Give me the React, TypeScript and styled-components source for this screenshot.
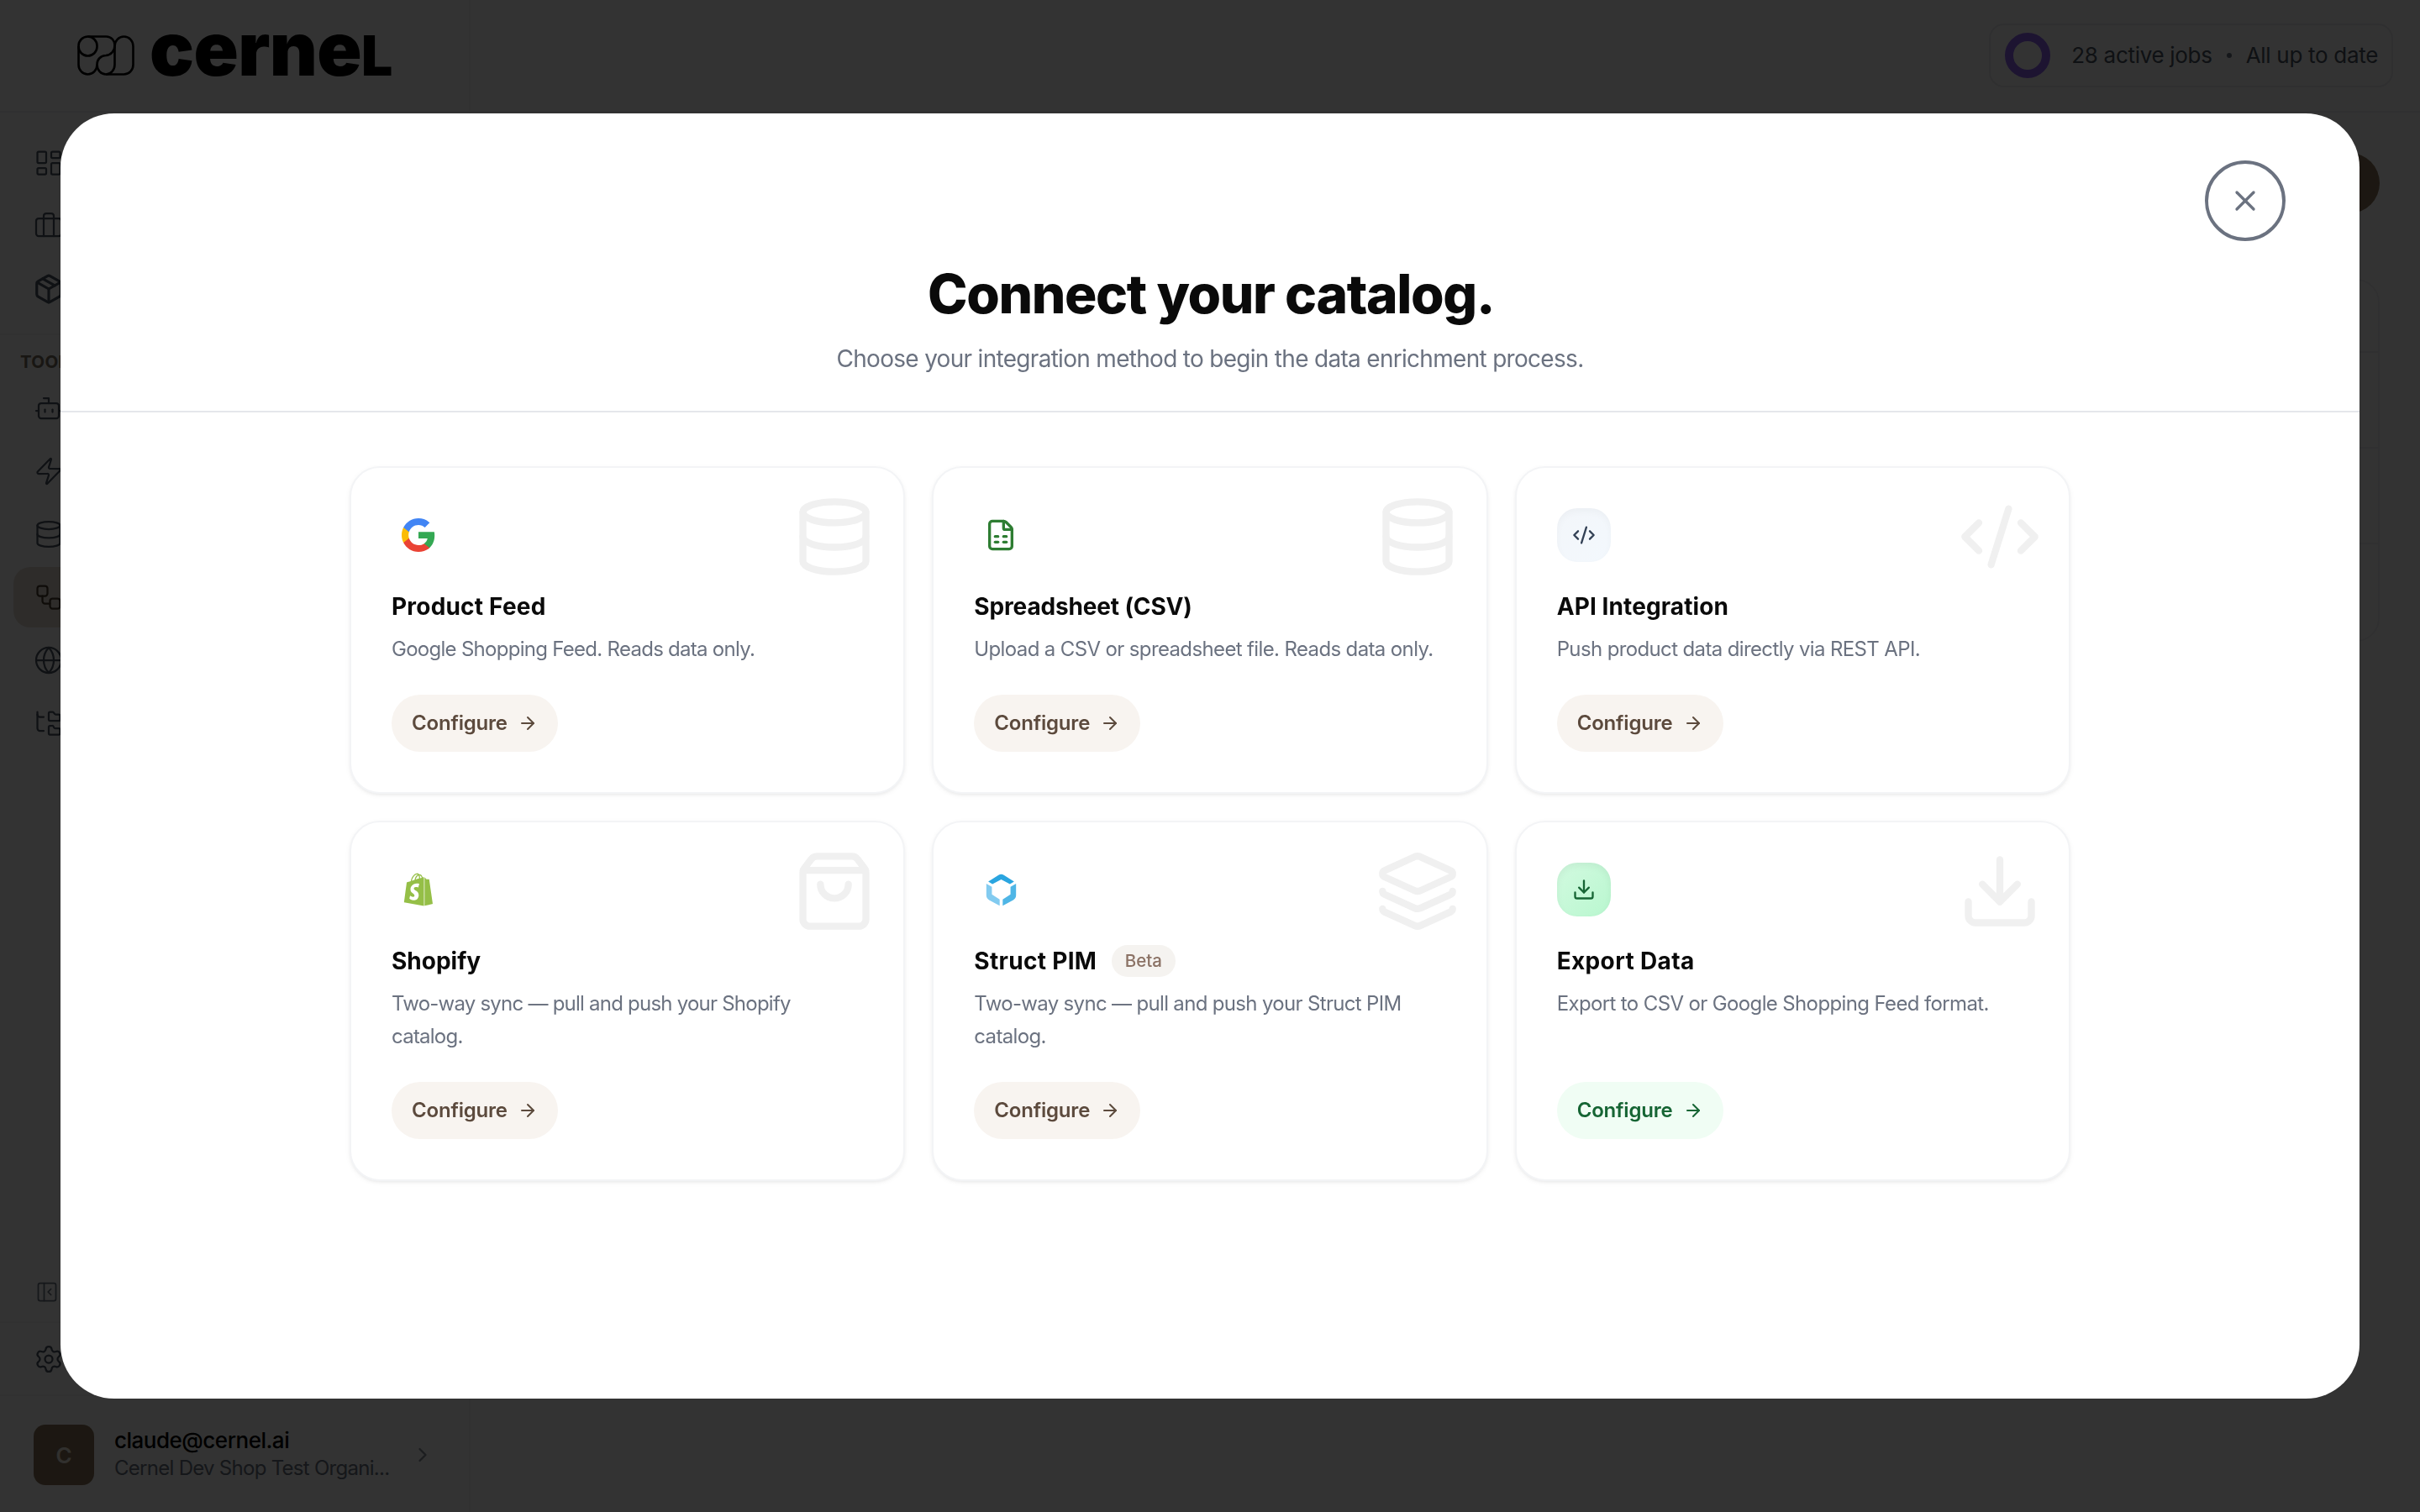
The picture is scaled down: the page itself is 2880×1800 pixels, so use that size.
import React from 'react';
import styled, { createGlobalStyle, css } from 'styled-components';
import {
  ArrowRight,
  Bot,
  Briefcase,
  ChevronRight,
  CodeXml,
  Database,
  Download,
  FileSpreadsheet,
  FolderTree,
  Globe,
  Layers,
  LayoutDashboard,
  Package,
  PanelLeftClose,
  Settings,
  ShoppingBag,
  Workflow,
  X,
  Zap,
  type LucideIcon,
} from 'lucide-react';
import { FaShopify } from 'react-icons/fa';

const GlobalStyle = createGlobalStyle`
  *, *::before, *::after { box-sizing: border-box; }
  body {
    margin: 0;
    background: #ffffff;
    font-family: Inter, "Liberation Sans", sans-serif;
    color: #0a0a0a;
  }
  h1, h2, p { margin: 0; }
  button { font: inherit; border: 0; margin: 0; cursor: pointer; }
  svg { display: block; flex: none; }
`;

/* ---------- App shell ---------- */

const Shell = styled.div`
  display: grid;
  grid-template-columns: 560px 1fr;
  width: 2880px;
  height: 1800px;
  overflow: hidden;
`;

const Sidebar = styled.aside`
  display: flex;
  flex-direction: column;
  border-right: 2px solid #f3f4f6;
`;

const Brand = styled.div`
  display: flex;
  align-items: center;
  gap: 20px;
  height: 134px;
  padding: 0 0 0 92px;
  border-bottom: 2px solid #f0f0f2;
`;

const Wordmark = styled.span`
  display: flex;
  align-items: baseline;
  height: 88px;
  margin-top: -17px;
  margin-left: -2px;
  font-size: 88px;
  line-height: 88px;
  font-weight: 900;
  letter-spacing: -0.6px;
  color: #000000;
`;

const WordmarkTail = styled.span`
  font-size: 66px;
  letter-spacing: 0;
`;

const NavList = styled.nav`
  display: flex;
  flex-direction: column;
  gap: 3px;
  padding: 24px 16px 0;
`;

const ToolsList = styled(NavList)`
  padding-top: 4px;
`;

const NavItem = styled.div<{ $active?: boolean }>`
  display: flex;
  align-items: center;
  height: 72px;
  padding: 0 24px;
  border-radius: 20px;
  color: ${(p) => (p.$active ? '#4b3e2e' : '#4b5563')};
  background: ${(p) => (p.$active ? '#e4ddd3' : 'transparent')};
`;

const NavIcon = styled.span`
  display: flex;
  justify-content: center;
  width: 36px;
`;

const SectionLabel = styled.div`
  margin-top: 17px;
  border-top: 2px solid #f3f4f6;
  padding: 18px 24px 0;
  height: 49px;
  font-size: 20.5px;
  line-height: 28px;
  font-weight: 700;
  letter-spacing: 0.3px;
  color: #7a6e60;
`;

const SidebarFoot = styled.div`
  display: flex;
  flex-direction: column;
  margin-top: auto;
`;

const CollapseRow = styled.div`
  display: flex;
  align-items: center;
  height: 71px;
  padding: 0 42px;
  color: #6b7280;
`;

const SettingsRow = styled.div`
  display: flex;
  align-items: center;
  height: 87px;
  padding: 0 40px;
  border-top: 2px solid #f3f4f6;
  color: #4b5563;
`;

const UserRow = styled.div`
  display: flex;
  align-items: center;
  height: 140px;
  padding: 2px 40px 0;
  border-top: 2px solid #f3f4f6;
`;

const Avatar = styled.div`
  display: flex;
  align-items: center;
  justify-content: center;
  width: 72px;
  height: 72px;
  border-radius: 14px;
  background: #8a7559;
  color: #f5efe6;
  font-size: 26px;
  font-weight: 600;
`;

const UserText = styled.div`
  display: flex;
  flex-direction: column;
  width: 330px;
  margin: 0 23px 4px 24px;
`;

const UserName = styled.span`
  font-size: 26px;
  line-height: 34px;
  font-weight: 500;
  letter-spacing: -0.5px;
  color: #000000;
`;

const UserOrg = styled.span`
  font-size: 24px;
  line-height: 31px;
  letter-spacing: -0.72px;
  white-space: nowrap;
  color: #6b7280;
`;

const Muted = styled.span`
  display: flex;
  color: #8a919c;
`;

const Main = styled.main`
  display: flex;
  flex-direction: column;
`;

const TopBar = styled.header`
  display: flex;
  justify-content: flex-end;
  align-items: center;
  height: 134px;
  padding-right: 32px;
  border-bottom: 2px solid #f0f0f2;
`;

const JobsPill = styled.div`
  display: flex;
  align-items: center;
  height: 76px;
  padding: 0 16px 0 17px;
  border: 2px solid #ececef;
  border-radius: 18px;
  font-size: 26px;
  line-height: 36px;
  letter-spacing: -0.3px;
  color: #4b5563;
`;

const Ring = styled.span`
  width: 54px;
  height: 54px;
  margin-right: 25px;
  border: 10px solid #9065f5;
  border-radius: 50%;
`;

const Dot = styled.span`
  width: 6px;
  height: 6px;
  margin: 0 17px;
  border-radius: 50%;
  background: #6b7280;
`;

const Content = styled.section`
  display: flex;
  flex-direction: column;
  align-items: flex-end;
  gap: 78px;
  padding: 48px 48px 0;
`;

const PrimaryAction = styled.div`
  width: 260px;
  height: 72px;
  border-radius: 36px;
  background: #8a7559;
`;

const TablePanel = styled.div`
  width: 100%;
  border: 2px solid #f1f1f4;
  border-radius: 28px;
`;

const TableRow = styled.div<{ $h: number }>`
  height: ${(p) => p.$h}px;
  border-bottom: 2px solid #f1f1f4;
  &:last-child {
    border-bottom: 0;
  }
`;

/* ---------- Dialog ---------- */

const Overlay = styled.div`
  position: fixed;
  inset: 0;
  display: flex;
  align-items: center;
  justify-content: center;
  background: rgba(0, 0, 0, 0.8);
`;

const Dialog = styled.div`
  position: relative;
  display: flex;
  flex-direction: column;
  width: 2736px;
  height: 1530px;
  border-radius: 64px;
  background: #ffffff;
  overflow: hidden;
`;

const CloseButton = styled.button`
  position: absolute;
  top: 56px;
  right: 88px;
  display: flex;
  align-items: center;
  justify-content: center;
  width: 96px;
  height: 96px;
  border: 4px solid #6b7280;
  border-radius: 50%;
  background: #ffffff;
  color: #6b7280;
`;

const DialogHeader = styled.div`
  display: flex;
  flex-direction: column;
  align-items: center;
  height: 356px;
  padding-top: 175px;
  border-bottom: 2px solid #e5e7eb;
`;

const DialogTitle = styled.h1`
  padding-left: 2px;
  font-size: 64px;
  line-height: 80px;
  font-weight: 800;
  letter-spacing: -1.38px;
  color: #0a0a0a;
`;

const DialogSubtitle = styled.p`
  margin-top: 17px;
  font-size: 28px;
  line-height: 40px;
  font-weight: 400;
  letter-spacing: -0.7px;
  color: #6b7280;
`;

const CardGrid = styled.div`
  display: grid;
  grid-template-columns: repeat(3, 1fr);
  gap: 32px;
  width: 2048px;
  margin: 64px auto 0;
`;

const Card = styled.article`
  position: relative;
  display: flex;
  flex-direction: column;
  align-items: flex-start;
  padding: 48px;
  border: 2px solid #f3f4f6;
  border-radius: 36px;
  background: #ffffff;
  box-shadow: 0 2px 6px rgba(0, 0, 0, 0.05), 0 2px 4px -2px rgba(0, 0, 0, 0.08);
`;

const Watermark = styled.div`
  position: absolute;
  top: 32px;
  right: 32px;
  color: #f0f0f0;
`;

type Tone = 'plain' | 'slate' | 'green';

const tones = {
  plain: css`
    color: #2e7d32;
  `,
  slate: css`
    color: #334155;
    background: linear-gradient(135deg, #f3f6fa, #f3f8fd);
    box-shadow: inset 0 4px 8px rgba(0, 0, 0, 0.03);
  `,
  green: css`
    color: #166534;
    background: linear-gradient(135deg, #d2fae0, #b9f7cf);
    box-shadow: inset 0 4px 8px rgba(0, 0, 0, 0.05);
  `,
};

const IconTile = styled.div<{ $tone: Tone }>`
  display: flex;
  align-items: center;
  justify-content: center;
  width: 64px;
  height: 64px;
  border-radius: 24px;
  ${(p) => tones[p.$tone]}
`;

const CardHeading = styled.div`
  display: flex;
  align-items: center;
  gap: 17.5px;
  height: 42px;
  margin-top: 32px;
`;

const CardTitle = styled.h2<{ $track: number }>`
  font-size: 28px;
  line-height: 42px;
  font-weight: 700;
  letter-spacing: ${(p) => p.$track}px;
  color: #0a0a0a;
`;

const Badge = styled.span`
  height: 38px;
  padding: 0 16px;
  border-radius: 19px;
  background: #f5f3f0;
  color: #8b7265;
  font-size: 20.5px;
  line-height: 38px;
  font-weight: 500;
  letter-spacing: 0;
`;

const CardText = styled.p<{ $track: number }>`
  max-width: 552px;
  margin: 11px 0 34.5px;
  font-size: 24px;
  line-height: 38.5px;
  font-weight: 400;
  letter-spacing: ${(p) => p.$track}px;
  color: #6b7280;
`;

const ConfigureButton = styled.button<{ $green: boolean }>`
  display: flex;
  align-items: center;
  gap: 12px;
  height: 68px;
  margin-top: auto;
  padding: 0 24px;
  border-radius: 34px;
  font-size: 24px;
  line-height: 32px;
  font-weight: 600;
  letter-spacing: -0.2px;
  background: ${(p) => (p.$green ? '#f0fdf4' : '#f8f4f0')};
  color: ${(p) => (p.$green ? '#166534' : '#5c4a3d')};
`;

/* ---------- Drawings ---------- */

const CernelMark = () => (
  <svg width="68" height="48" viewBox="0 0 68 48" fill="none" stroke="#000" strokeWidth="2.6">
    <rect x="1.5" y="1.5" width="22" height="23" rx="11" />
    <path d="M1.5 13v22a11 11.5 0 0 0 22 0" />
    <path d="M12.5 1.5H34a10 10 0 0 1 10.500 11a11 11.500 0 0 1-10.500 11.500a10.500 10.500 0 0 0-10.500 11" />
    <path d="M44.500 13v22a10.500 11.500 0 0 1-21 0" />
    <path d="M44.500 13a11 11.500 0 0 1 22 0v22a11 11.500 0 0 1-11 11.500H34" />
  </svg>
);

const GoogleLogo = () => (
  <svg width="40" height="40" viewBox="1 1 22 22">
    <path fill="#34A853" d="M22.560 12.250c0-.78-.07-1.530-.2-2.250H12v4.260h5.920c-.26 1.370-1.040 2.530-2.210 3.310v2.770h3.570c2.080-1.920 3.280-4.740 3.280-8.090z" />
    <path fill="#EA4335" d="M12 23c2.970 0 5.460-.98 7.280-2.660l-3.570-2.770c-.98.66-2.230 1.060-3.710 1.060-2.860 0-5.290-1.930-6.160-4.530H2.180v2.840C3.990 20.530 7.700 23 12 23z" />
    <path fill="#FBBC05" d="M5.840 14.090c-.22-.66-.35-1.360-.35-2.090s.13-1.430.35-2.090V7.070H2.180C1.430 8.550 1 10.220 1 12s.43 3.450 1.180 4.930l3.660-2.840z" />
    <path fill="#4285F4" d="M12 5.380c1.620 0 3.060.56 4.210 1.640l3.150-3.150C17.450 2.090 14.970 1 12 1 7.700 1 3.990 3.470 2.180 7.070l3.660 2.840c.87-2.600 3.300-4.530 6.160-4.530z" />
  </svg>
);

const StructLogo = () => (
  <svg width="37" height="39" viewBox="71 87 111 118">
    <path fill="#2aa5e0" d="M80 116 117 92Q126.500 87 136 92L173 116 158 125 126.500 108 95 125Z" />
    <path fill="#82cbf0" d="M73 123 93 135V162L121 180V203L83 182Q73 176 73 165Z" />
    <path fill="#4fb6e6" d="M180 123 160 135V162L132 180V203L170 182Q180 176 180 165Z" />
  </svg>
);

/* ---------- Data ---------- */

interface NavEntry {
  icon: LucideIcon;
  size?: number;
  stroke?: number;
  active?: boolean;
}

const primaryNav: NavEntry[] = [
  { icon: LayoutDashboard },
  { icon: Briefcase },
  { icon: Package, size: 38, stroke: 2 },
];

const toolsNav: NavEntry[] = [
  { icon: Bot },
  { icon: Zap },
  { icon: Database },
  { icon: Workflow, active: true },
  { icon: Globe },
  { icon: FolderTree },
];

interface Method {
  title: string;
  text: string;
  titleTrack: number;
  textTrack: number;
  tone: Tone;
  logo: React.ReactNode;
  watermark: LucideIcon;
  badge?: string;
}

const methods: Method[] = [
  {
    title: 'Product Feed',
    text: 'Google Shopping Feed. Reads data only.',
    titleTrack: 0.2,
    textTrack: -0.72,
    tone: 'plain',
    logo: <GoogleLogo />,
    watermark: Database,
  },
  {
    title: 'Spreadsheet (CSV)',
    text: 'Upload a CSV or spreadsheet file. Reads data only.',
    titleTrack: -0.15,
    textTrack: -0.63,
    tone: 'plain',
    logo: <FileSpreadsheet size={40} />,
    watermark: Database,
  },
  {
    title: 'API Integration',
    text: 'Push product data directly via REST API.',
    titleTrack: 0.1,
    textTrack: -0.63,
    tone: 'slate',
    logo: <CodeXml size={28} />,
    watermark: CodeXml,
  },
  {
    title: 'Shopify',
    text: 'Two-way sync — pull and push your Shopify catalog.',
    titleTrack: 0,
    textTrack: -0.77,
    tone: 'plain',
    logo: <FaShopify size={40} color="#95bf47" />,
    watermark: ShoppingBag,
  },
  {
    title: 'Struct PIM',
    text: 'Two-way sync — pull and push your Struct PIM catalog.',
    titleTrack: 0.3,
    textTrack: -0.67,
    tone: 'plain',
    logo: <StructLogo />,
    watermark: Layers,
    badge: 'Beta',
  },
  {
    title: 'Export Data',
    text: 'Export to CSV or Google Shopping Feed format.',
    titleTrack: 0.35,
    textTrack: -0.63,
    tone: 'green',
    logo: <Download size={28} />,
    watermark: Download,
  },
];

const NavRow = ({ entry }: { entry: NavEntry }) => {
  const Icon = entry.icon;
  return (
    <NavItem $active={entry.active}>
      <NavIcon>
        <Icon size={entry.size ?? 36} strokeWidth={entry.stroke ?? 1.5} />
      </NavIcon>
    </NavItem>
  );
};

const MethodCard = ({ method }: { method: Method }) => {
  const Mark = method.watermark;
  return (
    <Card>
      <Watermark>
        <Mark size={100} />
      </Watermark>
      <IconTile $tone={method.tone}>{method.logo}</IconTile>
      <CardHeading>
        <CardTitle $track={method.titleTrack}>{method.title}</CardTitle>
        {method.badge && <Badge>{method.badge}</Badge>}
      </CardHeading>
      <CardText $track={method.textTrack}>{method.text}</CardText>
      <ConfigureButton $green={method.tone === 'green'}>
        Configure
        <ArrowRight size={24} />
      </ConfigureButton>
    </Card>
  );
};

export default function App() {
  return (
    <>
      <GlobalStyle />
      <Shell>
        <Sidebar>
          <Brand>
            <CernelMark />
            <Wordmark>
              cerne<WordmarkTail>L</WordmarkTail>
            </Wordmark>
          </Brand>
          <NavList>
            {primaryNav.map((entry, i) => (
              <NavRow key={i} entry={entry} />
            ))}
          </NavList>
          <SectionLabel>TOOLS</SectionLabel>
          <ToolsList>
            {toolsNav.map((entry, i) => (
              <NavRow key={i} entry={entry} />
            ))}
          </ToolsList>
          <SidebarFoot>
            <CollapseRow>
              <PanelLeftClose size={28} strokeWidth={1.5} />
            </CollapseRow>
            <SettingsRow>
              <Settings size={36} strokeWidth={1.5} />
            </SettingsRow>
            <UserRow>
              <Avatar>C</Avatar>
              <UserText>
                <UserName>claude@cernel.ai</UserName>
                <UserOrg>Cernel Dev Shop Test Organi...</UserOrg>
              </UserText>
              <Muted>
                <ChevronRight size={28} strokeWidth={2} />
              </Muted>
            </UserRow>
          </SidebarFoot>
        </Sidebar>
        <Main>
          <TopBar>
            <JobsPill>
              <Ring />
              28 active jobs
              <Dot />
              All up to date
            </JobsPill>
          </TopBar>
          <Content>
            <PrimaryAction />
            <TablePanel>
              <TableRow $h={86} />
              <TableRow $h={114} />
              <TableRow $h={114} />
              <TableRow $h={114} />
            </TablePanel>
          </Content>
        </Main>
      </Shell>
      <Overlay>
        <Dialog>
          <DialogHeader>
            <DialogTitle>Connect your catalog.</DialogTitle>
            <DialogSubtitle>
              Choose your integration method to begin the data enrichment process.
            </DialogSubtitle>
          </DialogHeader>
          <CardGrid>
            {methods.map((m) => (
              <MethodCard key={m.title} method={m} />
            ))}
          </CardGrid>
          <CloseButton aria-label="Close">
            <X size={40} />
          </CloseButton>
        </Dialog>
      </Overlay>
    </>
  );
}
